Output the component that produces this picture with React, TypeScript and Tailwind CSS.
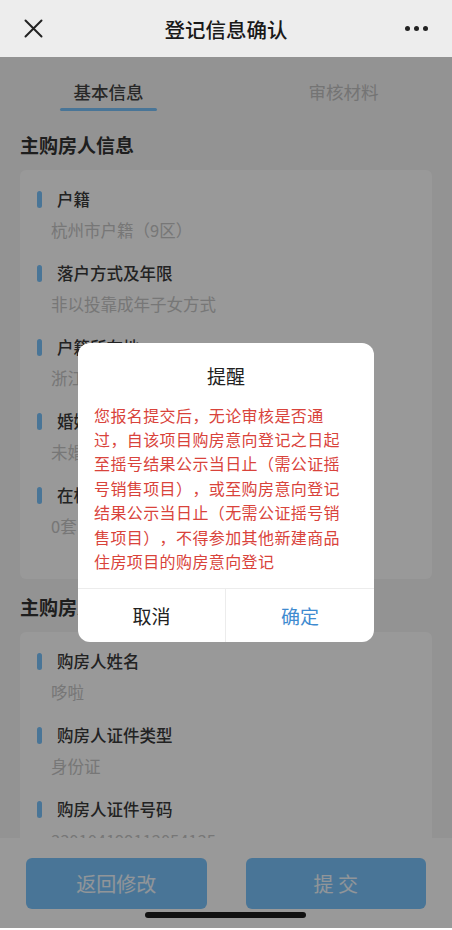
import React from "react";

const blue = "bg-[#7bc4fc]";

type Item = { label: string; value: string };

const houseInfo: Item[] = [
  { label: "户籍", value: "杭州市户籍（9区）" },
  { label: "落户方式及年限", value: "非以投靠成年子女方式" },
  { label: "户籍所在地", value: "浙江省杭州市西湖区" },
  { label: "婚姻状况", value: "未婚" },
  { label: "在杭住房套数", value: "0套" },
];

const buyerInfo: Item[] = [
  { label: "购房人姓名", value: "哆啦" },
  { label: "购房人证件类型", value: "身份证" },
  { label: "购房人证件号码", value: "330104199112054135" },
];

function InfoRow({ label, value }: Item) {
  return (
    <div className="mb-[19px]">
      <div className="flex items-center">
        <span className={`ml-[17px] w-[5px] h-[17px] rounded-full ${blue}`} />
        <span className="ml-[15px] text-[16.5px] leading-[24px] font-medium text-[#3a3a3a]">
          {label}
        </span>
      </div>
      <div className="mt-[7px] ml-[31px] text-[16.5px] leading-[24px] text-[#c6c6c6]">
        {value}
      </div>
    </div>
  );
}

function Section({ title, items, pb }: { title: string; items: Item[]; pb: string }) {
  return (
    <section className="px-[20px]">
      <h2 className="text-[19px] leading-[26px] font-bold text-[#333]">{title}</h2>
      <div className={`mt-[12px] bg-white rounded-[6px] pt-[17px] ${pb}`}>
        {items.map((it) => (
          <InfoRow key={it.label} {...it} />
        ))}
      </div>
    </section>
  );
}

export default function App() {
  return (
    <div className="relative w-full h-[928px] overflow-hidden bg-[#f5f5f5] flex flex-col font-['Noto_Sans_CJK_SC','Noto_Sans',sans-serif]">
      {/* 顶部导航 */}
      <header className="h-[57px] shrink-0 bg-[#ededed] grid grid-cols-[1fr_auto_1fr] items-center px-[24px]">
        <svg width="19" height="19" viewBox="0 0 19 19">
          <path d="M1.5 1.5 L17.5 17.5 M17.5 1.5 L1.5 17.5" stroke="#222" strokeWidth="2" strokeLinecap="round" />
        </svg>
        <h1 className="text-[20.5px] leading-[28px] font-medium text-[#191919]">登记信息确认</h1>
        <div className="flex justify-end gap-[4px]">
          <span className="w-[5px] h-[5px] rounded-full bg-[#222]" />
          <span className="w-[5px] h-[5px] rounded-full bg-[#222]" />
          <span className="w-[5px] h-[5px] rounded-full bg-[#222]" />
        </div>
      </header>

      <div className="relative flex-1 min-h-0 flex flex-col">
        <main className="flex-1 min-h-0 overflow-hidden">
          {/* 标签页 */}
          <div className="flex justify-between px-[60px] pt-[23px] h-[75px]">
            <div className="w-[97px] flex flex-col items-center">
              <span className="text-[17.5px] leading-[24px] font-medium text-[#444]">基本信息</span>
              <span className={`mt-[4px] w-full h-[3px] rounded-full ${blue}`} />
            </div>
            <div className="w-[97px] flex flex-col items-center">
              <span className="text-[17.5px] leading-[24px] text-[#c2c2c2]">审核材料</span>
            </div>
          </div>

          <Section title="主购房人信息" items={houseInfo} pb="pb-[22px]" />
          <div className="h-[15px]" />
          <Section title="主购房人身份信息" items={buyerInfo} pb="pb-[22px]" />
        </main>

        {/* 底部按钮 */}
        <footer className="h-[90px] shrink-0 bg-white grid grid-cols-2 gap-[39px] px-[26px] pt-[20px]">
          <button className={`h-[51px] rounded-[6px] ${blue} text-white/90 text-[20px]`}>返回修改</button>
          <button className={`h-[51px] rounded-[6px] ${blue} text-white/90 text-[20px]`}>提 交</button>
        </footer>

        {/* 遮罩与弹窗 */}
        <div className="absolute inset-0 bg-black/40 flex items-center justify-center">
          <div className="w-[296px] bg-white rounded-[12px] overflow-hidden">
            <h3 className="pt-[20px] text-center text-[19px] leading-[26px] text-[#222]">提醒</h3>
            <p className="mt-[14px] pl-[16px] pr-[24px] pb-[15px] text-[16px] leading-[24.4px] tracking-[0.4px] text-[#d9433b] [text-spacing-trim:space-all]">
              您报名提交后，无论审核是否通过，自该项目购房意向登记之日起至摇号结果公示当日止（需公证摇号销售项目），或至购房意向登记结果公示当日止（无需公证摇号销售项目），不得参加其他新建商品住房项目的购房意向登记
            </p>
            <div className="grid grid-cols-2 h-[54px] border-t border-[#ececec]">
              <button className="text-[19px] text-[#222] border-r border-[#ececec]">取消</button>
              <button className="text-[19px] text-[#3f8bd0]">确定</button>
            </div>
          </div>
        </div>
      </div>

      {/* 系统横条 */}
      <div className="absolute left-[145px] bottom-[10px] w-[161px] h-[6px] rounded-full bg-[#111]" />
    </div>
  );
}
